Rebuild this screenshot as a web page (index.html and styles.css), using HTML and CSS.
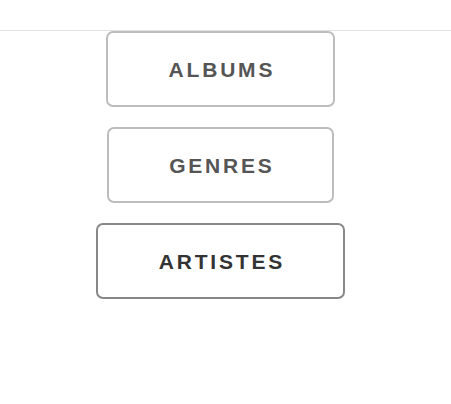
FILE: index.html
```html
<!DOCTYPE html>
<html>
<head>
<meta charset="utf-8">
<link rel="stylesheet" href="styles.css">
</head>
<body>
<header class="topbar"></header>
<nav class="menu">
  <a class="menu-btn">ALBUMS</a>
  <a class="menu-btn">GENRES</a>
  <a class="menu-btn active">ARTISTES</a>
</nav>
</body>
</html>
```
FILE: styles.css
```css
html, body {
  margin: 0;
  padding: 0;
  background: #fff;
  font-family: "Liberation Sans", Arial, sans-serif;
}
.topbar {
  height: 30px;
  border-bottom: 1px solid #e2e2e2;
}
.menu {
  width: 441px;
  display: flex;
  flex-direction: column;
  align-items: center;
  gap: 20px;
}
.menu-btn {
  box-sizing: border-box;
  height: 76px;
  padding: 2px 57.5px 0;
  display: flex;
  align-items: center;
  justify-content: center;
  border: 2px solid #bdbdbd;
  border-radius: 7px;
  color: #555;
  font-weight: bold;
  font-size: 21px;
  letter-spacing: 2.8px;
  text-indent: 2.8px;
}
.menu-btn.active {
  border-color: #888;
  color: #333;
}
```
